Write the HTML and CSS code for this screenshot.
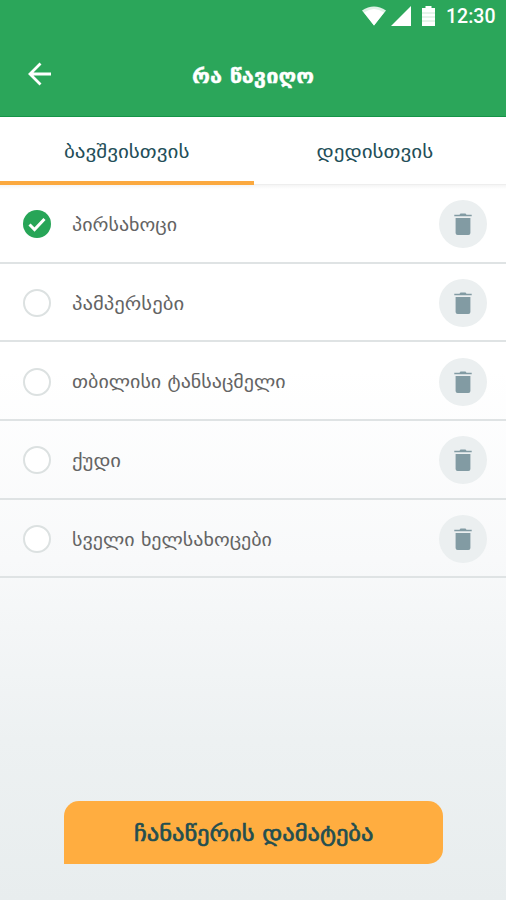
FILE: index.html
```html
<!DOCTYPE html>
<html lang="ka">
<head>
<meta charset="utf-8">
<title>რა წავიღო</title>
<link rel="stylesheet" href="styles.css">
</head>
<body>
<svg class="sprite" aria-hidden="true">
  <symbol id="trash" viewBox="0 0 18 22"><path d="M0.300 1.700H5.500L6.500 .5h5l1 1.200h5.200V3.300H.3zM1.600 5H16.400V20q0 2-2 2H3.600q-2 0-2-2z"/></symbol>
</svg>
<header class="header">
  <div class="status">
    <svg class="wifi" viewBox="0 0 24 19"><path class="faint" d="M0 4Q12-4 24 4L12 19z"/><path d="M2 6Q12-1 22 6L12 19z"/></svg>
    <svg class="signal" viewBox="0 0 20 20"><path d="M20 0V20H0z"/></svg>
    <svg class="battery" viewBox="0 0 13 20"><path d="M3.500 0h6v2H13V20H0V2h3.500z"/><path class="bars" d="M0 7h13M0 11h13M0 15h13"/></svg>
    <span class="clock">12:30</span>
  </div>
  <div class="bar">
    <svg class="back" viewBox="0 0 24 24"><path d="M23 12H2M12.500 1.500L2 12l10.500 10.500"/></svg>
    <h1 class="title">რა წავიღო</h1>
  </div>
</header>
<nav class="tabs">
  <div class="tab active"><span>ბავშვისთვის</span></div>
  <div class="tab"><span>დედისთვის</span></div>
</nav>
<ul class="list">
  <li class="row"><span class="check done"><svg viewBox="0 0 28 28"><path d="M6.500 14.500l5 5L21.500 9"/></svg></span><span class="label">პირსახოცი</span><span class="delete"><svg><use href="#trash"/></svg></span></li>
  <li class="row"><span class="check"></span><span class="label wide">პამპერსები</span><span class="delete"><svg><use href="#trash"/></svg></span></li>
  <li class="row"><span class="check"></span><span class="label">თბილისი ტანსაცმელი</span><span class="delete"><svg><use href="#trash"/></svg></span></li>
  <li class="row"><span class="check"></span><span class="label wide">ქუდი</span><span class="delete"><svg><use href="#trash"/></svg></span></li>
  <li class="row"><span class="check"></span><span class="label">სველი ხელსახოცები</span><span class="delete"><svg><use href="#trash"/></svg></span></li>
</ul>
<footer class="footer"><div class="add"><span class="add-text">ჩანაწერის დამატება</span></div></footer>
</body>
</html>
```
FILE: styles.css
```css
* { box-sizing: border-box; }
body {
  margin: 0;
  width: 506px;
  height: 900px;
  display: flex;
  flex-direction: column;
  overflow: hidden;
  font-family: "DejaVu Sans", sans-serif;
  background: linear-gradient(#fff 0, #fff 370px, #f8f9fa 560px, #edf1f2 740px, #e8edee 900px);
}
.sprite { display: none; }
.header { height: 117px; background: #2ba65a; border-bottom: 1px solid #159447; color: #fff; }
.status { height: 32px; display: flex; align-items: center; justify-content: flex-end; padding-right: 10px; fill: #fff; }
.wifi { width: 24px; height: 20px; margin-right: 5px; }
.faint { opacity: .85; }
.signal { width: 20px; height: 20px; margin-right: 11px; }
.battery { width: 13px; height: 20px; margin-right: 11px; }
.bars { stroke: #bfe3cc; stroke-width: .8; }
.clock { font: 500 19.500px Roboto, sans-serif; width: 50px; white-space: nowrap; }
.bar { height: 84px; display: grid; grid-template-columns: 80px 1fr 80px; align-items: center; }
.back { width: 24px; height: 24px; margin-left: 28px; fill: none; stroke: #fff; stroke-width: 2.800; }
.title { margin: 4px 0 0; text-align: center; font-size: 19px; line-height: 24px; font-weight: 700; transform: scaleX(1.150); -webkit-text-stroke: .3px #fff; }
.tabs { height: 68px; display: grid; grid-template-columns: 254px 252px; background: #fff; color: #234e58; font-size: 18px; flex: none; }
.tab { display: flex; align-items: center; justify-content: center; padding-top: 2px; border-bottom: 1px solid #eee; white-space: nowrap; }
.tab:not(.active) { padding-right: 11px; }
.tab span { transform: scaleX(1.170); }
.tab.active { padding-top: 5px; border-bottom: 4px solid #fba93f; }
.list { list-style: none; margin: 0; padding: 0; background: linear-gradient(#f5f5f5, transparent 4px); }
.row { height: 78.700px; border-bottom: 2px solid #dfe3e4; display: flex; align-items: center; padding: 2px 19px 0 23px; }
.check { width: 28px; height: 28px; border-radius: 50%; border: 2px solid #dce1e1; background: #fff; margin-right: 21px; }
.done { border: 0; background: #27a557; }
.done svg { display: block; width: 28px; height: 28px; fill: none; stroke: #fff; stroke-width: 3; }
.label { font-size: 18px; color: #646464; white-space: nowrap; transform: scaleX(1.112); transform-origin: left; }
.label.wide { transform: scaleX(1.150); }
.delete { width: 48px; height: 48px; margin-left: auto; border-radius: 50%; background: #ebeff0; display: flex; align-items: center; justify-content: center; }
.delete svg { width: 18px; height: 22px; fill: #829ba3; }
.footer { margin-top: auto; padding: 0 63px 36px 64px; }
.add { height: 63px; border-radius: 15px 15px 15px 0; background: #ffad40; color: #234e50; display: flex; align-items: center; justify-content: center; font-size: 21px; padding-top: 3px; white-space: nowrap; }
.add-text { transform: scaleX(1.165); -webkit-text-stroke: .6px #234e50; }
```
